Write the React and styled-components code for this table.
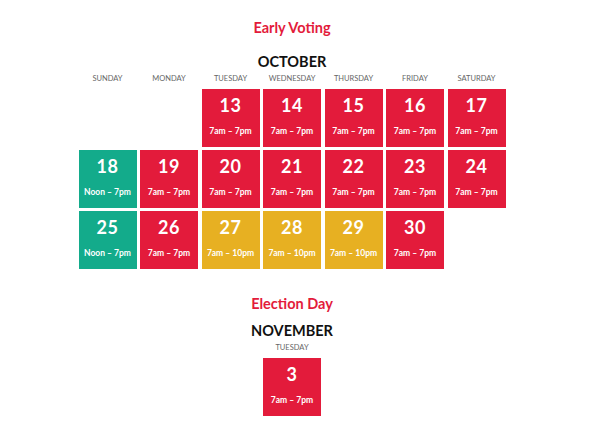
import styled, { createGlobalStyle } from 'styled-components';

const GlobalStyle = createGlobalStyle`
  body {
    margin: 0;
    background: #ffffff;
    font-family: Lato, "Open Sans", "Liberation Sans", sans-serif;
  }
`;

const COLORS = {
  red: '#e31b3b',
  green: '#13ab8b',
  yellow: '#e7b022',
};

const Page = styled.div`
  width: 584px;
  display: flex;
  flex-direction: column;
  align-items: center;
  padding-top: 19px;
`;

const SectionTitle = styled.h2`
  margin: 0;
  font-size: 14.5px;
  line-height: 18px;
  font-weight: 700;
  color: ${COLORS.red};
  margin-top: ${({ $top }) => $top || 0}px;
`;

const Month = styled.div`
  font-size: 14.5px;
  line-height: 18px;
  font-weight: 700;
  color: #111;
  margin-top: ${({ $top }) => $top || 0}px;
`;

const Grid = styled.div`
  display: grid;
  grid-template-columns: repeat(${({ $cols }) => $cols}, 58px);
  column-gap: 3.5px;
  row-gap: 3px;
`;

const DayLabel = styled.div`
  font-size: 7.5px;
  line-height: 8px;
  color: #666;
  text-align: center;
  text-transform: uppercase;
  margin: 4px 0 3px;
`;

const Cell = styled.div`
  height: 58px;
  background: ${({ $color }) => COLORS[$color] || 'transparent'};
  color: #fff;
  display: flex;
  flex-direction: column;
  align-items: center;
`;

const DayNum = styled.div`
  font-size: 18px;
  line-height: 20px;
  font-weight: 700;
  margin-top: 6px;
  letter-spacing: 0.5px;
`;

const Hours = styled.div`
  font-size: 8.5px;
  line-height: 10px;
  font-weight: 700;
  margin-top: 11px;
`;

const days = ['Sunday', 'Monday', 'Tuesday', 'Wednesday', 'Thursday', 'Friday', 'Saturday'];

const october = [
  null, null,
  { n: 13, c: 'red', h: '7am – 7pm' },
  { n: 14, c: 'red', h: '7am – 7pm' },
  { n: 15, c: 'red', h: '7am – 7pm' },
  { n: 16, c: 'red', h: '7am – 7pm' },
  { n: 17, c: 'red', h: '7am – 7pm' },
  { n: 18, c: 'green', h: 'Noon – 7pm' },
  { n: 19, c: 'red', h: '7am – 7pm' },
  { n: 20, c: 'red', h: '7am – 7pm' },
  { n: 21, c: 'red', h: '7am – 7pm' },
  { n: 22, c: 'red', h: '7am – 7pm' },
  { n: 23, c: 'red', h: '7am – 7pm' },
  { n: 24, c: 'red', h: '7am – 7pm' },
  { n: 25, c: 'green', h: 'Noon – 7pm' },
  { n: 26, c: 'red', h: '7am – 7pm' },
  { n: 27, c: 'yellow', h: '7am – 10pm' },
  { n: 28, c: 'yellow', h: '7am – 10pm' },
  { n: 29, c: 'yellow', h: '7am – 10pm' },
  { n: 30, c: 'red', h: '7am – 7pm' },
  null,
];

const DayCell = ({ day }) =>
  day ? (
    <Cell $color={day.c}>
      <DayNum>{day.n}</DayNum>
      <Hours>{day.h}</Hours>
    </Cell>
  ) : (
    <Cell />
  );

export default function App() {
  return (
    <>
      <GlobalStyle />
      <Page>
        <SectionTitle>Early Voting</SectionTitle>
        <Month $top={16}>OCTOBER</Month>
        <Grid $cols={7}>
          {days.map((d) => (
            <DayLabel key={d}>{d}</DayLabel>
          ))}
          {october.map((day, i) => (
            <DayCell key={i} day={day} />
          ))}
        </Grid>
        <SectionTitle $top={26}>Election Day</SectionTitle>
        <Month $top={9}>NOVEMBER</Month>
        <Grid $cols={1}>
          <DayLabel>Tuesday</DayLabel>
          <DayCell day={{ n: 3, c: 'red', h: '7am – 7pm' }} />
        </Grid>
      </Page>
    </>
  );
}
